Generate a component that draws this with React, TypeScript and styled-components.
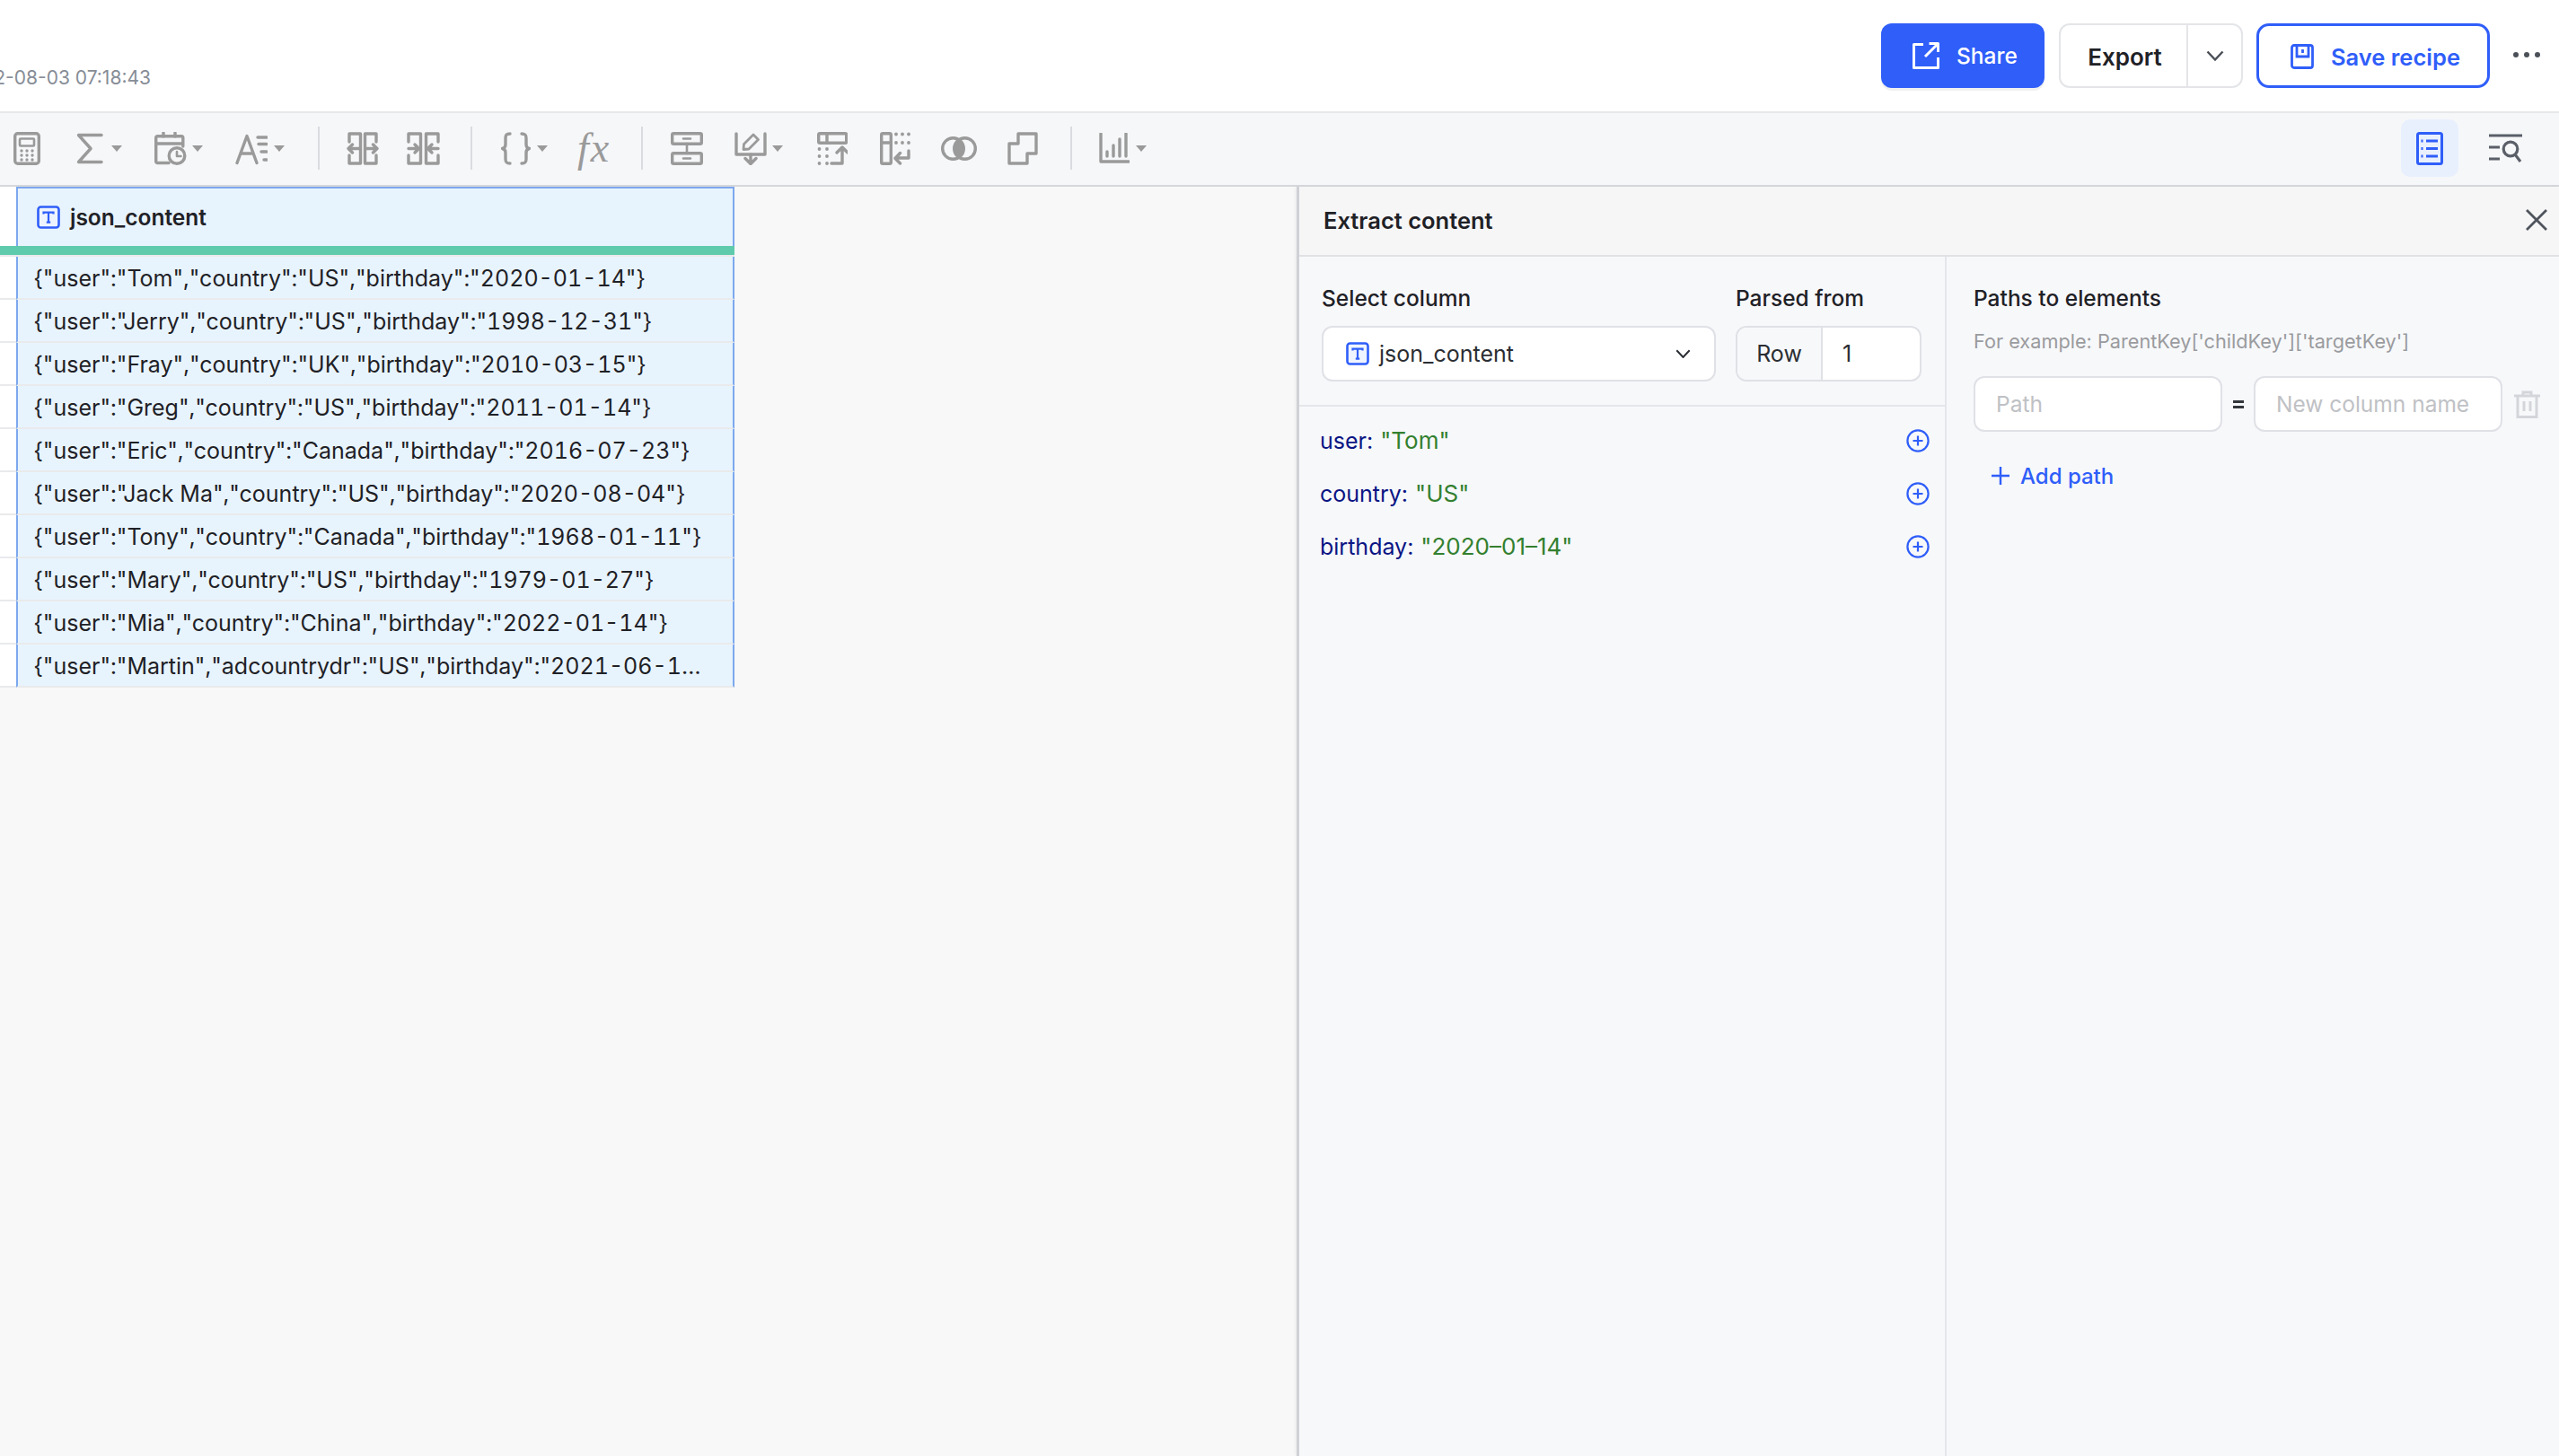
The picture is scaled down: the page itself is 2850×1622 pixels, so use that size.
import React from 'react';
import styled, { createGlobalStyle } from 'styled-components';

const GlobalStyle = createGlobalStyle`
  html, body {
    margin: 0;
    padding: 0;
    background: #fff;
  }
  body {
    font-family: Inter, "Liberation Sans", sans-serif;
    color: #1f2126;
    overflow: hidden;
  }
  * {
    box-sizing: border-box;
  }
`;

const Page = styled.div`
  width: 2850px;
  height: 1622px;
  display: flex;
  flex-direction: column;
  overflow: hidden;
`;

const TopBar = styled.header`
  height: 126px;
  flex: none;
  display: flex;
  justify-content: space-between;
  background: #fff;
  border-bottom: 2px solid #e6e7e9;
`;

const TimeBox = styled.div`
  width: 168px;
  padding-top: 72px;
  display: flex;
  justify-content: flex-end;
  overflow: hidden;
`;

const Time = styled.span`
  flex: none;
  font-size: 21px;
  line-height: 30px;
  color: #878d96;
`;

const Actions = styled.div`
  display: flex;
  align-items: flex-start;
  padding: 26px 21px 0 0;
`;

const ShareButton = styled.div`
  width: 182px;
  height: 72px;
  display: flex;
  align-items: center;
  padding-left: 35px;
  gap: 19px;
  border-radius: 12px;
  background: #2f5ef9;
  color: #fff;
  font-size: 24.5px;
  font-weight: 500;
  box-shadow: 0 3px 0 #f0f0f1;
`;

const ExportGroup = styled.div`
  width: 205px;
  height: 72px;
  margin-left: 16px;
  display: flex;
  border: 2px solid #e4e5e8;
  border-radius: 12px;
  background: #fff;
`;

const ExportLabel = styled.div`
  width: 142px;
  display: flex;
  align-items: center;
  justify-content: center;
  padding: 2px 0 0 3px;
  border-right: 2px solid #e4e5e8;
  font-size: 26px;
  font-weight: 600;
`;

const ExportCaret = styled.div`
  flex: 1;
  display: flex;
  align-items: center;
  justify-content: center;
  color: #4a4f57;
`;

const SaveButton = styled.div`
  width: 260px;
  height: 72px;
  margin-left: 15px;
  display: flex;
  align-items: center;
  padding: 2px 0 0 35px;
  gap: 19px;
  border: 3px solid #2f5ef9;
  border-radius: 14px;
  color: #2f5ef9;
  font-size: 25.5px;
  font-weight: 600;
`;

const MoreButton = styled.div`
  width: 30px;
  height: 72px;
  margin-left: 26px;
  margin-top: -1px;
  display: flex;
  align-items: center;
  justify-content: space-between;
  span {
    width: 6px;
    height: 6px;
    border-radius: 50%;
    background: #4c5159;
  }
`;

const ToolBar = styled.div`
  height: 82px;
  flex: none;
  display: flex;
  align-items: center;
  padding: 0 41px 2px 15px;
  background: #f6f7f9;
  border-bottom: 2px solid #d6d7dc;
`;

const ToolIcon = styled.svg<{ $ml?: number }>`
  flex: none;
  margin-left: ${(p) => p.$ml ?? 0}px;
  fill: none;
  stroke: #9a9a9a;
  stroke-width: 3.4;
  stroke-linecap: round;
  stroke-linejoin: round;
  .solid {
    fill: #9a9a9a;
    stroke: none;
  }
`;

const Caret = styled.span<{ $ml: number }>`
  flex: none;
  margin-left: ${(p) => p.$ml}px;
  width: 0;
  height: 0;
  border-left: 6px solid transparent;
  border-right: 6px solid transparent;
  border-top: 7px solid #9a9a9a;
`;

const ToolDivider = styled.span<{ $ml: number }>`
  flex: none;
  margin-left: ${(p) => p.$ml}px;
  width: 2px;
  height: 48px;
  background: #d9dbe0;
`;

const FxGlyph = styled.span<{ $ml: number }>`
  flex: none;
  width: 39px;
  margin-left: ${(p) => p.$ml}px;
  font-family: "Liberation Serif", serif;
  font-style: italic;
  font-size: 46px;
  line-height: 40px;
  letter-spacing: 2px;
  white-space: nowrap;
  color: #9a9a9a;
`;

const ViewToggles = styled.div`
  margin-left: auto;
  display: flex;
  align-items: center;
`;

const ActiveToggle = styled.div`
  width: 64px;
  height: 64px;
  display: flex;
  align-items: center;
  justify-content: center;
  border-radius: 10px;
  background: #e8f0fe;
`;

const Body = styled.main`
  flex: 1;
  min-height: 0;
  display: flex;
`;

const GridArea = styled.section`
  width: 1444px;
  flex: none;
  background: #f8f8f8;
`;

const HeadRow = styled.div`
  display: flex;
  height: 66px;
`;

const IndexHead = styled.div`
  width: 18px;
  background: #fff;
`;

const ColumnHead = styled.div`
  width: 800px;
  display: flex;
  align-items: center;
  gap: 11px;
  padding: 0 0 1px 21px;
  background: #e8f4fd;
  border: 2px solid #7ca8ee;
  border-bottom: 0;
  font-size: 24.5px;
  font-weight: 600;
`;

const StatusBar = styled.div`
  width: 818px;
  height: 10px;
  background: #5fcbac;
`;

const StatusGap = styled.div`
  width: 818px;
  height: 2px;
  background: #e9eaec;
`;

const Row = styled.div`
  display: flex;
  height: 48px;
`;

const IndexCell = styled.div`
  width: 18px;
  background: #fff;
  border-bottom: 2px solid #e9eaec;
`;

const DataCell = styled.div`
  width: 800px;
  height: 48px;
  padding: 0 30px 0 18px;
  background: #e8f4fd;
  border-left: 2px solid #7ca8ee;
  border-right: 2px solid #7ca8ee;
  border-bottom: 2px solid #e9eaec;
  font-size: 25px;
  font-variant-numeric: tabular-nums;
  line-height: 49px;
  color: #1f2126;
  white-space: nowrap;
  overflow: hidden;
  text-overflow: ellipsis;
`;

const Panel = styled.aside`
  flex: 1;
  display: flex;
  flex-direction: column;
  background: #f7f8fa;
  border-left: 3px solid #cfd1d6;
  box-shadow: -2px 0 3px rgba(0, 0, 0, 0.04);
`;

const PanelHead = styled.div`
  height: 78px;
  flex: none;
  display: flex;
  align-items: center;
  justify-content: space-between;
  padding: 0 12px 2px 27px;
  background: #f6f6f7;
  border-bottom: 2px solid #e0e1e5;
  font-size: 25.5px;
  font-weight: 600;
  color: #1f2126;
`;

const PanelBody = styled.div`
  flex: 1;
  display: flex;
`;

const SourceColumn = styled.div`
  width: 721px;
  flex: none;
  border-right: 2px solid #e5e6ea;
`;

const SourceForm = styled.div`
  display: flex;
  gap: 22px;
  padding: 31px 27px 26px 25px;
  border-bottom: 2px solid #e5e6ea;
`;

const Field = styled.div<{ $w: number }>`
  width: ${(p) => p.$w}px;
  flex: none;
`;

const Label = styled.div`
  font-size: 24.5px;
  line-height: 30px;
  font-weight: 500;
  color: #1f2126;
`;

const SelectBox = styled.div`
  height: 62px;
  margin-top: 16px;
  display: flex;
  align-items: center;
  gap: 11px;
  padding: 0 26px 0 25px;
  border: 2px solid #e0e1e6;
  border-radius: 12px;
  background: #fff;
  font-size: 25px;
  color: #2b2e33;
`;

const SelectText = styled.span`
  flex: 1;
`;

const RowGroup = styled.div`
  height: 62px;
  margin-top: 16px;
  display: flex;
  border: 2px solid #e0e1e6;
  border-radius: 12px;
  background: #fff;
  font-size: 25px;
  color: #2b2e33;
`;

const RowLabel = styled.div`
  width: 95px;
  flex: none;
  display: flex;
  align-items: center;
  justify-content: center;
  background: #f7f8fa;
  border-right: 2px solid #e0e1e6;
  border-radius: 10px 0 0 10px;
`;

const RowValue = styled.div`
  flex: 1;
  display: flex;
  align-items: center;
  padding-left: 22px;
`;

const KeyList = styled.div`
  padding: 8px 17px 0 23px;
`;

const KeyRow = styled.div`
  height: 59px;
  display: flex;
  align-items: center;
  justify-content: space-between;
  font-size: 25px;
`;

const KeyName = styled.span`
  color: #0b1584;
`;

const KeyValue = styled.span`
  margin-left: 8px;
  font-size: 26px;
  color: #33802f;
`;

const PathsColumn = styled.div`
  flex: 1;
  padding: 31px 0 0 30px;
`;

const Hint = styled.div`
  margin-top: 18px;
  font-size: 21.7px;
  line-height: 30px;
  color: #9a9b9e;
`;

const PathRow = styled.div`
  margin-top: 24px;
  display: flex;
  align-items: center;
`;

const PathInput = styled.div`
  width: 277px;
  height: 62px;
  flex: none;
  display: flex;
  align-items: center;
  padding-left: 23px;
  border: 2px solid #e0e1e6;
  border-radius: 12px;
  background: #fff;
  font-size: 24.5px;
  color: #bfc1c5;
`;

const Equals = styled.span`
  width: 35px;
  flex: none;
  display: flex;
  flex-direction: column;
  align-items: center;
  gap: 3px;
  i {
    width: 12px;
    height: 3px;
    background: #33363b;
  }
`;

const AddPath = styled.div`
  height: 40px;
  margin-top: 29px;
  padding-left: 20px;
  display: flex;
  align-items: center;
  gap: 12px;
  color: #2f5ef9;
  font-size: 24px;
  font-weight: 500;
`;

const rows = [
  '{"user":"Tom","country":"US","birthday":"2020-01-14"}',
  '{"user":"Jerry","country":"US","birthday":"1998-12-31"}',
  '{"user":"Fray","country":"UK","birthday":"2010-03-15"}',
  '{"user":"Greg","country":"US","birthday":"2011-01-14"}',
  '{"user":"Eric","country":"Canada","birthday":"2016-07-23"}',
  '{"user":"Jack Ma","country":"US","birthday":"2020-08-04"}',
  '{"user":"Tony","country":"Canada","birthday":"1968-01-11"}',
  '{"user":"Mary","country":"US","birthday":"1979-01-27"}',
  '{"user":"Mia","country":"China","birthday":"2022-01-14"}',
  '{"user":"Martin","adcountrydr":"US","birthday":"2021-06-14"}',
];

const keys = [
  { name: 'user:', value: '"Tom"' },
  { name: 'country:', value: '"US"' },
  { name: 'birthday:', value: '"2020–01–14"' },
];

const TypeIcon = () => (
  <svg width="26" height="26" viewBox="0 0 26 26" fill="none" style={{ flex: 'none' }}>
    <rect x="1.5" y="1.5" width="23" height="23" rx="3" fill="#eef4ff" stroke="#2f5ef9" strokeWidth="2.6" />
    <path d="M7.5 9.5V7.6H18.5V9.5M13 7.6V18.6M10.8 18.6H15.2" stroke="#2f5ef9" strokeWidth="2.2" />
  </svg>
);

const Chevron = ({ size = 20 }: { size?: number }) => (
  <svg width={size} height={size * 0.6} viewBox="0 0 20 12" fill="none">
    <path d="M1.5 1.5L10 10.5L18.5 1.5" stroke="currentColor" strokeWidth="2.4" />
  </svg>
);

const PlusCircle = () => (
  <svg width="26" height="26" viewBox="0 0 26 26" fill="none">
    <circle cx="13" cy="13" r="11.6" stroke="#2f5ef9" strokeWidth="2.2" />
    <path d="M13 7.5V18.5M7.5 13H18.5" stroke="#2f5ef9" strokeWidth="2.2" />
  </svg>
);

const App = () => {
  return (
    <Page>
      <GlobalStyle />
      <TopBar>
        <TimeBox>
          <Time>2022-08-03 07:18:43</Time>
        </TimeBox>
        <Actions>
          <ShareButton>
            <svg width="30" height="30" viewBox="0 0 30 30" fill="none" stroke="#fff" strokeWidth="3">
              <path d="M12 2.5H1.5V28.5H28.5V17" strokeLinejoin="round" />
              <path d="M14 16L28 2M18.5 1.5H28.5V11" strokeLinejoin="round" />
            </svg>
            Share
          </ShareButton>
          <ExportGroup>
            <ExportLabel>Export</ExportLabel>
            <ExportCaret>
              <Chevron />
            </ExportCaret>
          </ExportGroup>
          <SaveButton>
            <svg width="26" height="28" viewBox="0 0 26 28" fill="none" stroke="#2f5ef9" strokeWidth="2.8">
              <rect x="1.5" y="1.5" width="23" height="25" rx="2.5" />
              <path d="M7 2V14H20V2M13.5 6V10" />
            </svg>
            Save recipe
          </SaveButton>
          <MoreButton>
            <span />
            <span />
            <span />
          </MoreButton>
        </Actions>
      </TopBar>

      <ToolBar>
        <ToolIcon width="30" height="37" viewBox="0 0 30 37">
          <rect x="1.7" y="1.7" width="26.6" height="33.6" rx="3" />
          <rect x="7" y="7.5" width="16" height="8" rx="1" strokeWidth="2.6" />
          {[21, 26, 31].map((y) =>
            [9, 15, 21].map((x) => <circle key={`${x}-${y}`} className="solid" cx={x} cy={y} r="1.7" />)
          )}
        </ToolIcon>
        <ToolIcon $ml={40} width="30" height="37" viewBox="0 0 30 37">
          <path d="M28 3.5H2.5L16 18.5L2.5 33.5H28" />
        </ToolIcon>
        <Caret $ml={9} />
        <ToolIcon $ml={36} width="36" height="37" viewBox="0 0 36 37">
          <path d="M16 34.5H3.5C2.4 34.5 1.7 33.8 1.7 32.7V6.5C1.7 5.4 2.4 4.7 3.5 4.7H30C31.1 4.7 31.8 5.4 31.8 6.5V16" />
          <path d="M2 13H31M10 1V5M23 1V5" />
          <circle cx="25" cy="26.5" r="8.8" fill="#f6f7f9" />
          <path d="M25 22V27H29.5" strokeWidth="2.6" />
        </ToolIcon>
        <Caret $ml={6} />
        <ToolIcon $ml={36} width="36" height="37" viewBox="0 0 36 37">
          <path d="M2 34.5L13 4.5L24 34.5M6.5 24H19.5" />
          <path d="M25 6H35M26 13.5H35M29 22H35M32 31H35" />
        </ToolIcon>
        <Caret $ml={7} />
        <ToolDivider $ml={37} />
        <ToolIcon $ml={30} width="36" height="37" viewBox="0 0 36 37">
          <path d="M3 11V2H15.5V35H3V26M33 11V2H20.5V35H33V26" />
          <path d="M14 18.5H2M6.5 14L2 18.5L6.5 23M22 18.5H34M29.5 14L34 18.5L29.5 23" />
        </ToolIcon>
        <ToolIcon $ml={31} width="37" height="37" viewBox="0 0 37 37">
          <path d="M2 11V2H15.5V35H2V26M35 11V2H21.5V35H35V26" />
          <path d="M2 18.5H13M9 14L13.5 18.5L9 23M35 18.5H24M28 14L23.5 18.5L28 23" />
        </ToolIcon>
        <ToolDivider $ml={34} />
        <ToolIcon $ml={32} width="33" height="37" viewBox="0 0 33 37">
          <path d="M10 2C6 2 5 3.5 5 7V14C5 16.5 4 18 1.5 18.5C4 19 5 20.5 5 23V30C5 33.5 6 35 10 35" />
          <path d="M23 2C27 2 28 3.5 28 7V14C28 16.5 29 18 31.5 18.5C29 19 28 20.5 28 23V30C28 33.5 27 35 23 35" />
        </ToolIcon>
        <Caret $ml={7} />
        <FxGlyph $ml={33}>fx</FxGlyph>
        <ToolDivider $ml={32} />
        <ToolIcon $ml={31} width="36" height="37" viewBox="0 0 36 37">
          <rect x="1.7" y="1.7" width="32.6" height="11.6" rx="1.5" />
          <rect x="1.7" y="23.7" width="32.6" height="11.6" rx="1.5" />
          <path d="M14 7.5H22M14 29.5H22M18 13V24" strokeWidth="2.6" />
        </ToolIcon>
        <ToolIcon $ml={35} width="36" height="37" viewBox="0 0 36 37">
          <path d="M2 2V25H34V2" />
          <path d="M18 25V35.5M12 29.5L18 35.5L24 29.5" />
          <path d="M10 19.5L10.5 13.5L21 3L26.5 8.5L16 19Z" strokeWidth="2.8" />
        </ToolIcon>
        <Caret $ml={6} />
        <ToolIcon $ml={38} width="34" height="37" viewBox="0 0 34 37">
          <rect x="1.7" y="1.7" width="31" height="10.6" rx="1.5" />
          <path d="M11 2V12M16 35H28V18M22 23L28 17L34 23" />
          {[19, 27, 35].map((y) =>
            [2.5, 11].map((x) => <circle key={`${x}-${y}`} className="solid" cx={x} cy={y} r="1.9" />)
          )}
        </ToolIcon>
        <ToolIcon $ml={36} width="34" height="37" viewBox="0 0 34 37">
          <rect x="1.7" y="1.7" width="10.6" height="33.6" rx="1.5" />
          <path d="M2 12H12M32 21V29H17M22.5 23.5L17 29.5L22.5 35" />
          {[2.5, 12].map((y) =>
            [18, 25, 32].map((x) => <circle key={`${x}-${y}`} className="solid" cx={x} cy={y} r="1.9" />)
          )}
        </ToolIcon>
        <ToolIcon $ml={34} width="40" height="29" viewBox="0 0 40 29">
          <path className="solid" d="M20 4.5A12 12 0 0 1 20 24.5A12 12 0 0 1 20 4.5Z" />
          <circle cx="13.5" cy="14.5" r="11.8" />
          <circle cx="26.5" cy="14.5" r="11.8" />
        </ToolIcon>
        <ToolIcon $ml={34} width="34" height="37" viewBox="0 0 34 37">
          <path d="M12 13V2H32V24H22V35H2V13Z" />
        </ToolIcon>
        <ToolDivider $ml={36} />
        <ToolIcon $ml={30} width="34" height="34" viewBox="0 0 34 34">
          <path d="M2 1V32H33" />
          <path d="M9 21V26M16 14V26M23 7V26M30 1V26" />
        </ToolIcon>
        <Caret $ml={7} />

        <ViewToggles>
          <ActiveToggle>
            <svg width="30" height="37" viewBox="0 0 30 37" fill="none" stroke="#2f5ef9" strokeWidth="3">
              <rect x="1.5" y="1.5" width="27" height="34" rx="2" />
              <path d="M11 10H24M11 18.5H24M11 27H24" />
              <path d="M5.5 10H7.5M5.5 18.5H7.5M5.5 27H7.5" />
            </svg>
          </ActiveToggle>
          <svg width="37" height="32" viewBox="0 0 37 32" fill="none" stroke="#5a5f68" strokeWidth="3.2" style={{ marginLeft: 34 }}>
            <path d="M0 2H37M0 15H12M0 28H12" />
            <circle cx="24" cy="17" r="7.8" />
            <path d="M29 23L35 31" />
          </svg>
        </ViewToggles>
      </ToolBar>

      <Body>
        <GridArea>
          <HeadRow>
            <IndexHead />
            <ColumnHead>
              <TypeIcon />
              json_content
            </ColumnHead>
          </HeadRow>
          <StatusBar />
          <StatusGap />
          {rows.map((r) => (
            <Row key={r}>
              <IndexCell />
              <DataCell>{r}</DataCell>
            </Row>
          ))}
        </GridArea>

        <Panel>
          <PanelHead>
            Extract content
            <svg width="26" height="26" viewBox="0 0 26 26" fill="none" stroke="#4f545c" strokeWidth="2.8">
              <path d="M2 2L24 24M24 2L2 24" />
            </svg>
          </PanelHead>
          <PanelBody>
            <SourceColumn>
              <SourceForm>
                <Field $w={439}>
                  <Label>Select column</Label>
                  <SelectBox>
                    <TypeIcon />
                    <SelectText>json_content</SelectText>
                    <Chevron size={17} />
                  </SelectBox>
                </Field>
                <Field $w={207}>
                  <Label>Parsed from</Label>
                  <RowGroup>
                    <RowLabel>Row</RowLabel>
                    <RowValue>1</RowValue>
                  </RowGroup>
                </Field>
              </SourceForm>
              <KeyList>
                {keys.map((k) => (
                  <KeyRow key={k.name}>
                    <span>
                      <KeyName>{k.name}</KeyName>
                      <KeyValue>{k.value}</KeyValue>
                    </span>
                    <PlusCircle />
                  </KeyRow>
                ))}
              </KeyList>
            </SourceColumn>
            <PathsColumn>
              <Label>Paths to elements</Label>
              <Hint>For example: ParentKey['childKey']['targetKey']</Hint>
              <PathRow>
                <PathInput>Path</PathInput>
                <Equals>
                  <i />
                  <i />
                </Equals>
                <PathInput>New column name</PathInput>
                <svg width="29" height="31" viewBox="0 0 29 31" fill="none" stroke="#d3d5da" strokeWidth="3" style={{ marginLeft: 13 }}>
                  <path d="M0 6H29M10 6V2H19V6M4 6V29.5H25V6M11 12V23M18 12V23" />
                </svg>
              </PathRow>
              <AddPath>
                <svg width="20" height="20" viewBox="0 0 20 20" fill="none" stroke="#2f5ef9" strokeWidth="2.4">
                  <path d="M10 0V20M0 10H20" />
                </svg>
                Add path
              </AddPath>
            </PathsColumn>
          </PanelBody>
        </Panel>
      </Body>
    </Page>
  );
};

export default App;
